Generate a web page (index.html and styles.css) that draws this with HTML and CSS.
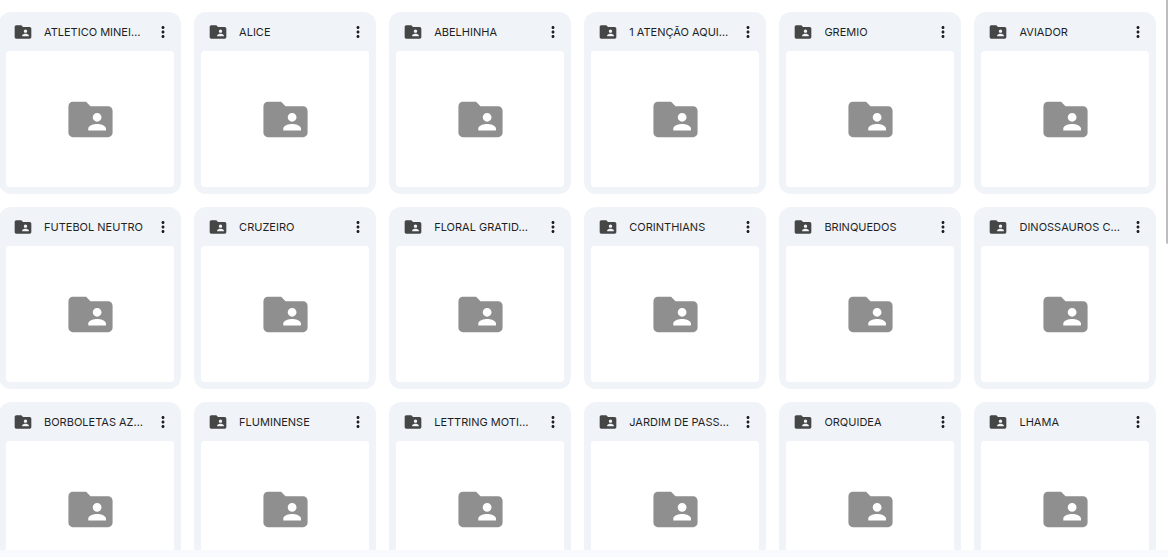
FILE: index.html
```html
<!DOCTYPE html>
<html lang="pt">
<head>
<meta charset="utf-8">
<title>Pastas</title>
<link rel="stylesheet" href="styles.css">
</head>
<body>
<svg class="defs" width="0" height="0" aria-hidden="true">
  <symbol id="shared" viewBox="0 0 24 24"><path d="M20 6h-8l-2-2H4c-1.1 0-1.99.9-1.99 2L2 18c0 1.1.9 2 2 2h16c1.1 0 2-.9 2-2V8c0-1.1-.9-2-2-2zm-5 3c1.1 0 2 .9 2 2s-.9 2-2 2-2-.9-2-2 .9-2 2-2zm4 8h-8v-1c0-1.33 2.67-2 4-2s4 .67 4 2v1z"/></symbol>
  <symbol id="more" viewBox="0 0 24 24"><path d="M12 8c1.1 0 2-.9 2-2s-.9-2-2-2-2 .9-2 2 .9 2 2 2zm0 2c-1.1 0-2 .9-2 2s.9 2 2 2 2-.9 2-2-.9-2-2-2zm0 6c-1.1 0-2 .9-2 2s.9 2 2 2 2-.9 2-2-.9-2-2-2z"/></symbol>
</svg>
<main class="page">
  <div class="grid">
    <article class="card"><header class="head"><svg class="ico"><use href="#shared"/></svg><span class="name">ATLETICO MINEI…</span><svg class="kebab"><use href="#more"/></svg></header><div class="thumb"><svg class="big"><use href="#shared"/></svg></div></article>
    <article class="card"><header class="head"><svg class="ico"><use href="#shared"/></svg><span class="name">ALICE</span><svg class="kebab"><use href="#more"/></svg></header><div class="thumb"><svg class="big"><use href="#shared"/></svg></div></article>
    <article class="card"><header class="head"><svg class="ico"><use href="#shared"/></svg><span class="name">ABELHINHA</span><svg class="kebab"><use href="#more"/></svg></header><div class="thumb"><svg class="big"><use href="#shared"/></svg></div></article>
    <article class="card"><header class="head"><svg class="ico"><use href="#shared"/></svg><span class="name">1 ATENÇÃO AQUI…</span><svg class="kebab"><use href="#more"/></svg></header><div class="thumb"><svg class="big"><use href="#shared"/></svg></div></article>
    <article class="card"><header class="head"><svg class="ico"><use href="#shared"/></svg><span class="name">GREMIO</span><svg class="kebab"><use href="#more"/></svg></header><div class="thumb"><svg class="big"><use href="#shared"/></svg></div></article>
    <article class="card"><header class="head"><svg class="ico"><use href="#shared"/></svg><span class="name">AVIADOR</span><svg class="kebab"><use href="#more"/></svg></header><div class="thumb"><svg class="big"><use href="#shared"/></svg></div></article>
    <article class="card"><header class="head"><svg class="ico"><use href="#shared"/></svg><span class="name">FUTEBOL NEUTRO</span><svg class="kebab"><use href="#more"/></svg></header><div class="thumb"><svg class="big"><use href="#shared"/></svg></div></article>
    <article class="card"><header class="head"><svg class="ico"><use href="#shared"/></svg><span class="name">CRUZEIRO</span><svg class="kebab"><use href="#more"/></svg></header><div class="thumb"><svg class="big"><use href="#shared"/></svg></div></article>
    <article class="card"><header class="head"><svg class="ico"><use href="#shared"/></svg><span class="name">FLORAL GRATID…</span><svg class="kebab"><use href="#more"/></svg></header><div class="thumb"><svg class="big"><use href="#shared"/></svg></div></article>
    <article class="card"><header class="head"><svg class="ico"><use href="#shared"/></svg><span class="name">CORINTHIANS</span><svg class="kebab"><use href="#more"/></svg></header><div class="thumb"><svg class="big"><use href="#shared"/></svg></div></article>
    <article class="card"><header class="head"><svg class="ico"><use href="#shared"/></svg><span class="name">BRINQUEDOS</span><svg class="kebab"><use href="#more"/></svg></header><div class="thumb"><svg class="big"><use href="#shared"/></svg></div></article>
    <article class="card"><header class="head"><svg class="ico"><use href="#shared"/></svg><span class="name">DINOSSAUROS C…</span><svg class="kebab"><use href="#more"/></svg></header><div class="thumb"><svg class="big"><use href="#shared"/></svg></div></article>
    <article class="card"><header class="head"><svg class="ico"><use href="#shared"/></svg><span class="name">BORBOLETAS AZ…</span><svg class="kebab"><use href="#more"/></svg></header><div class="thumb"><svg class="big"><use href="#shared"/></svg></div></article>
    <article class="card"><header class="head"><svg class="ico"><use href="#shared"/></svg><span class="name">FLUMINENSE</span><svg class="kebab"><use href="#more"/></svg></header><div class="thumb"><svg class="big"><use href="#shared"/></svg></div></article>
    <article class="card"><header class="head"><svg class="ico"><use href="#shared"/></svg><span class="name">LETTRING MOTI…</span><svg class="kebab"><use href="#more"/></svg></header><div class="thumb"><svg class="big"><use href="#shared"/></svg></div></article>
    <article class="card"><header class="head"><svg class="ico"><use href="#shared"/></svg><span class="name">JARDIM DE PASS…</span><svg class="kebab"><use href="#more"/></svg></header><div class="thumb"><svg class="big"><use href="#shared"/></svg></div></article>
    <article class="card"><header class="head"><svg class="ico"><use href="#shared"/></svg><span class="name">ORQUIDEA</span><svg class="kebab"><use href="#more"/></svg></header><div class="thumb"><svg class="big"><use href="#shared"/></svg></div></article>
    <article class="card"><header class="head"><svg class="ico"><use href="#shared"/></svg><span class="name">LHAMA</span><svg class="kebab"><use href="#more"/></svg></header><div class="thumb"><svg class="big"><use href="#shared"/></svg></div></article>
  </div>
</main>
<div class="band"></div>
<div class="scrollbar"></div>
</body>
</html>
```
FILE: styles.css
```css
* { box-sizing: border-box; }
html, body { margin: 0; height: 557px; overflow: hidden; background: #fff; }
body { font-family: Inter, Roboto, "Liberation Sans", sans-serif; }
.defs { position: absolute; }
.page { height: 550px; overflow: hidden; padding-top: 12px; }
.grid {
  display: grid;
  grid-template-columns: repeat(6, 182px);
  grid-auto-rows: 182px;
  column-gap: 13.1px;
  row-gap: 13px;
  margin-left: -1px;
}
.card {
  display: flex;
  flex-direction: column;
  background: #f0f4f9;
  border-radius: 12px;
  padding: 0 7px 7px;
}
.head {
  height: 39px;
  flex: none;
  display: flex;
  align-items: center;
  padding-left: 7px;
}
.ico { width: 20px; height: 20px; fill: #444746; flex: none; margin-right: 11px; }
.name {
  flex: 1;
  min-width: 0;
  font-size: 11px;
  font-weight: 400;
  color: #1f1f1f;
  white-space: nowrap;
}
.kebab { width: 18px; height: 18px; fill: #1f1f1f; flex: none; margin: 0 2px 0 4px; }
.thumb {
  flex: 1;
  display: flex;
  align-items: center;
  justify-content: center;
  background: #fff;
  border-radius: 4px;
}
.big { width: 53px; height: 53px; fill: #8f8f8f; }
.band { height: 7px; background: #f8fafd; }
.scrollbar {
  position: absolute;
  top: 0;
  right: 0;
  width: 2px;
  height: 244px;
  background: #bdbdbd;
  border-radius: 0 0 0 2px;
}
```
